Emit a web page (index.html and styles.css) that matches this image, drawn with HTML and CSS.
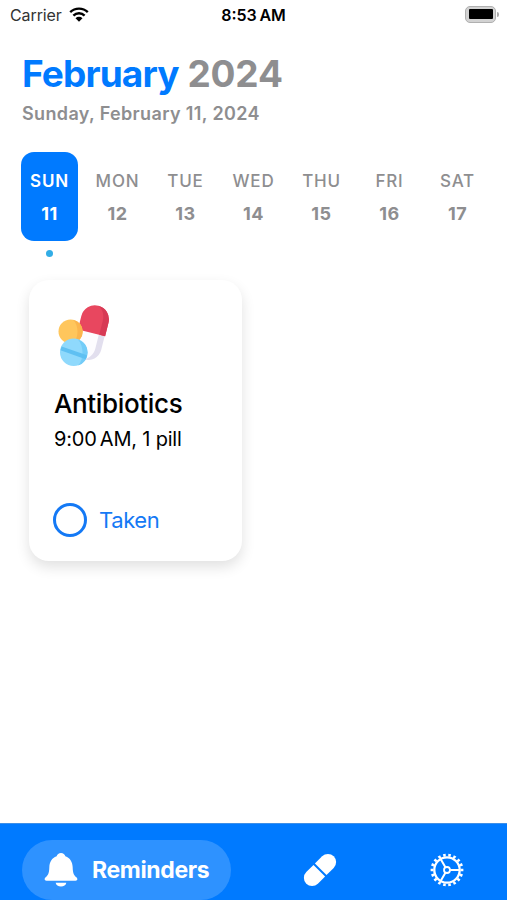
FILE: index.html
```html
<!DOCTYPE html>
<html lang="en">
  <head>
    <meta charset="utf-8">
    <title>Reminders</title>
    <link rel="stylesheet" href="styles.css">
  </head>
  <body>
    <div class="status-bar">
      <div class="carrier">
        <span>Carrier</span>
        <svg class="wifi" viewBox="0 0 20 15">
          <path d="M1.200 5.200a12.600 12.600 0 0 1 17.600 0M4.400 8.600a8 8 0 0 1 11.200 0" fill="none" stroke="#000" stroke-width="2.400"/>
          <path d="M6.500 11.200a5 5 0 0 1 7 0L10 14.800z"/>
        </svg>
      </div>
      <div class="clock">8:53&#8202;&#8202;AM</div>
      <div class="battery-wrap">
        <div class="battery"><div class="battery-level"></div></div>
        <div class="battery-tip"></div>
      </div>
    </div>

    <div class="header">
      <h1><span class="month">February</span> <span class="year">2024</span></h1>
      <p class="date">Sunday, February 11, 2024</p>
    </div>

    <div class="week">
      <div class="day selected"><span class="name">SUN</span><span class="number">11</span></div>
      <div class="day"><span class="name">MON</span><span class="number">12</span></div>
      <div class="day"><span class="name">TUE</span><span class="number">13</span></div>
      <div class="day"><span class="name">WED</span><span class="number">14</span></div>
      <div class="day"><span class="name">THU</span><span class="number">15</span></div>
      <div class="day"><span class="name">FRI</span><span class="number">16</span></div>
      <div class="day"><span class="name">SAT</span><span class="number">17</span></div>
    </div>
    <div class="dot"></div>

    <div class="card">
      <svg class="pills" viewBox="0 0 52 62">
        <g transform="rotate(14 34 28)">
          <path d="M21 28h26v14a13 13 0 0 1-26 0z" fill="#fdfcff"/>
          <path d="M41 28h6v14a13 13 0 0 1-15 13.200C37 54 41 49 41 42z" fill="#e2dfee"/>
          <path d="M19.500 28V14a14 14 0 0 1 28 0v14z" fill="#e8475f"/>
          <path d="M33.500 0a14 14 0 0 1 14 14v14h-6V14c0-7-3-12-8-14z" fill="#d73a55"/>
        </g>
        <circle cx="12.500" cy="26.500" r="12" fill="#ffc65c"/>
        <path d="M15 14.700a12 12 0 0 1 0 23.600C21 33 21 20 15 14.700z" fill="#fbb54d"/>
        <circle cx="15.700" cy="47.300" r="13.700" fill="#8fd9fc"/>
        <path d="M20 34.400a13.700 13.700 0 0 1 0 26.200C26 54 26 41 20 34.400z" fill="#74ccf8"/>
        <path d="M3.600 41.500L29 50.200l-1.300 4L2.400 45.200z" fill="#5fc0f2"/>
      </svg>
      <h2>Antibiotics</h2>
      <p class="dose">9:00&#8202;&#8202;AM, 1 pill</p>
      <div class="taken">
        <div class="circle"></div>
        <span>Taken</span>
      </div>
    </div>

    <div class="tab-bar">
      <div class="tab active">
        <svg class="bell" viewBox="0 0 34 35">
          <path d="M17 0c2.300 0 4 1.400 4.500 3.300 5 1.800 7.300 6 7.500 11 .2 6.700 1.300 8.200 3.600 10.500 1.100 1.100 1.200 1.700 1.200 2.200 0 1-.7 1.500-1.800 1.500H2C.9 28.500.2 28 .2 27c0-.5.1-1.100 1.200-2.200C3.700 22.500 4.800 21 5 14.300c.2-5 2.500-9.200 7.500-11C13 1.400 14.700 0 17 0zM11.500 30.500h11c-.5 2.500-2.600 4-5.500 4s-5-1.500-5.500-4z" fill="#fff"/>
        </svg>
        <span>Reminders</span>
      </div>
      <div class="tab">
        <svg class="icon" viewBox="-17 -17 34 34">
          <g transform="rotate(45)" fill="#fff">
            <path d="M-8.200-1V-11.200a8.200 8.200 0 0 1 16.400 0V-1z"/>
            <path d="M-8.200 1V11.200a8.200 8.200 0 0 0 16.400 0V1z"/>
          </g>
        </svg>
      </div>
      <div class="tab">
        <svg class="icon" viewBox="-17 -17 34 34" fill="none" stroke="#fff">
          <circle r="12.700" stroke-width="2.300"/>
          <circle r="15" stroke-width="2.800" pathLength="180" stroke-dasharray="5 5" stroke-dashoffset="2.500"/>
          <circle r="3" stroke-width="1.800"/>
          <path d="M3.200 0H12.500M-1.600-2.800L-6.200-10.800M-1.600 2.800L-6.200 10.800" stroke-width="2"/>
        </svg>
      </div>
    </div>
  </body>
</html>
```
FILE: styles.css
```css
body {
  margin: 0;
  height: 900px;
  display: flex;
  flex-direction: column;
  overflow: hidden;
  background-color: #fff;
  font-family: Inter, "Liberation Sans", sans-serif;
}

h1,
h2,
p {
  margin: 0;
  white-space: nowrap;
}

.status-bar {
  display: grid;
  grid-template-columns: 1fr auto 1fr;
  align-items: center;
  height: 30px;
  padding: 0 8px 0 10px;
  font-size: 16px;
}

.carrier {
  display: flex;
  align-items: center;
  gap: 7px;
  color: #333;
  letter-spacing: -0.1px;
}

.wifi {
  width: 20px;
  height: 15px;
  margin-bottom: 2px;
}

.clock {
  padding-right: 2px;
  font-weight: 600;
}

.battery-wrap {
  display: flex;
  align-items: center;
  justify-content: flex-end;
  gap: 1px;
  padding-bottom: 2px;
}

.battery {
  box-sizing: border-box;
  width: 31px;
  height: 17px;
  padding: 2px;
  border: 1px solid #b0b0b0;
  border-radius: 5px;
  background-color: #d2d2d2;
}

.battery-level {
  height: 10px;
  margin: 0.5px;
  border-radius: 1px;
  background-color: #000;
}

.battery-tip {
  width: 2px;
  height: 5px;
  border-radius: 0 2px 2px 0;
  background-color: #aaa;
}

.header {
  height: 122px;
  padding: 20px 22px 0;
  box-sizing: border-box;
}

h1 {
  font-size: 37px;
  line-height: 48px;
  font-weight: 700;
}

.month {
  color: #007aff;
  letter-spacing: -0.85px;
}

.year,
.date {
  color: #8e8e90;
}

.year {
  letter-spacing: -0.2px;
}

.date {
  margin-top: 4px;
  font-size: 18px;
  line-height: 24px;
  font-weight: 600;
  letter-spacing: 0.36px;
}

.week {
  display: grid;
  grid-template-columns: repeat(7, 68px);
  justify-content: center;
  justify-items: center;
}

.day {
  display: flex;
  flex-direction: column;
  align-items: center;
  box-sizing: border-box;
  width: 57px;
  height: 89px;
  padding-top: 17px;
  gap: 9px;
  border-radius: 13px;
  color: #8e8e90;
  line-height: 24px;
}

.day.selected {
  background-color: #007aff;
  color: #fff;
}

.name {
  font-size: 17px;
  font-weight: 500;
  letter-spacing: 0.8px;
}

.selected .name {
  font-weight: 600;
}

.number {
  font-size: 18px;
  font-weight: 700;
  letter-spacing: 0.5px;
}

.dot {
  width: 7px;
  height: 7px;
  margin: 9px 0 0 46px;
  border-radius: 50%;
  background-color: #32ade6;
}

.card {
  box-sizing: border-box;
  width: 213px;
  height: 281px;
  margin: 23px 0 0 29px;
  padding: 25px;
  border-radius: 20px;
  background-color: #fff;
  box-shadow: 0 6px 14px rgba(0, 0, 0, 0.12);
}

.pills {
  display: block;
  width: 52px;
  height: 62px;
  margin-left: 4px;
}

h2 {
  margin-top: 21px;
  font-size: 26px;
  line-height: 32px;
  font-weight: 500;
  letter-spacing: -0.35px;
}

.dose {
  margin-top: 6px;
  font-size: 20px;
  line-height: 26px;
  letter-spacing: -0.2px;
}

.taken {
  display: flex;
  align-items: center;
  gap: 12px;
  margin-top: 51px;
  font-size: 22px;
  letter-spacing: -0.4px;
  color: #1479f5;
}

.circle {
  box-sizing: border-box;
  width: 34px;
  height: 34px;
  margin-left: -1px;
  border: 3px solid #1479f5;
  border-radius: 50%;
}

.tab-bar {
  display: grid;
  grid-template-columns: 234px 127px 127px;
  align-items: center;
  height: 60px;
  margin-top: auto;
  padding: 16px 0 0 22px;
  border-top: 1px solid #3d8fe8;
  background-color: #007aff;
  color: #fff;
}

.tab {
  display: flex;
  align-items: center;
  justify-content: center;
}

.tab.active {
  box-sizing: border-box;
  justify-content: flex-start;
  width: 209px;
  height: 60px;
  padding-left: 22px;
  gap: 14px;
  border-radius: 30px;
  background-color: #2e92ff;
  font-size: 23px;
  font-weight: 700;
  letter-spacing: -0.35px;
}

.bell,
.icon {
  width: 34px;
  height: 34px;
}
```
